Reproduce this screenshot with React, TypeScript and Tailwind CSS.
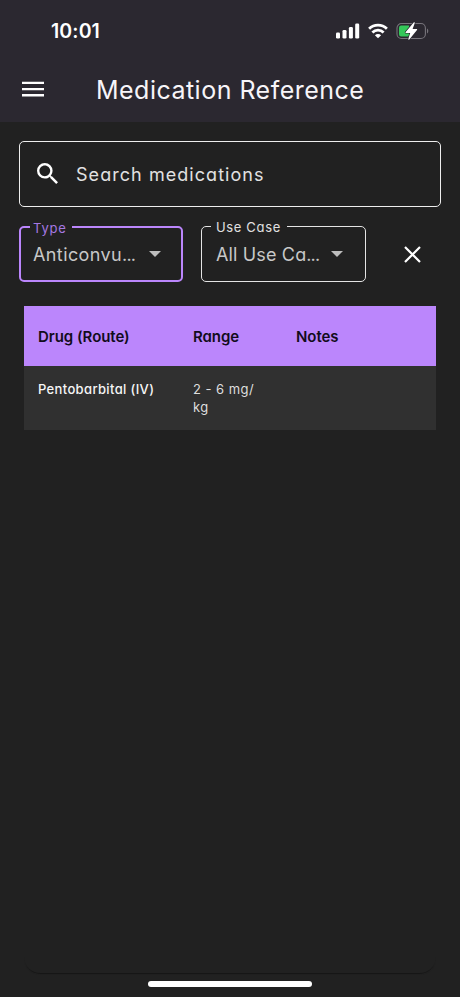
import React from "react";

function StatusBar() {
  return (
    <div className="flex h-[62px] items-center justify-between pl-[51px] pr-[31px]">
      <span className="pt-[2px] text-[19.5px] font-semibold leading-none tracking-[0.1px] text-white">10:01</span>
      <div className="flex items-center gap-[8px]">
        <svg width="24" height="16" viewBox="0 0 24 16" fill="#fff">
          <rect x="0" y="9.5" width="4" height="6" rx="1.3" />
          <rect x="6.5" y="7" width="4" height="8.5" rx="1.3" />
          <rect x="12.9" y="4" width="4" height="11.5" rx="1.3" />
          <rect x="19.2" y="0.5" width="4" height="15" rx="1.3" />
        </svg>
        <svg width="20" height="16" viewBox="0 0 20 16" fill="none" stroke="#fff" strokeWidth="2.8">
          <path d="M1.1 5.8a12.8 12.8 0 0 1 17.8 0" />
          <path d="M4.4 9.4a8 8 0 0 1 11.2 0" />
          <path d="M10 15.3 6.9 12.2a4.4 4.4 0 0 1 6.2 0z" fill="#fff" stroke="none" />
        </svg>
        <svg width="33" height="20" viewBox="0 0 33 20">
          <rect x="1" y="2.5" width="28.4" height="15" rx="4.5" fill="none" stroke="#77747b" strokeWidth="1.1" />
          <path d="M31 7.6c1.7.7 1.7 4.2 0 4.9z" fill="#77747b" />
          <path d="M5.2 4.5H13v11H5.2A2.2 2.2 0 0 1 3 13.3V6.7A2.2 2.2 0 0 1 5.2 4.5z" fill="#34c759" />
          <path d="M17.7 1.5 9.7 10.9c-.4.5-.1 1 .5 1h4l-1.9 6c-.2.8.5 1.1 1 .5l7.7-9.3c.4-.5.1-1-.5-1h-3.9l2.2-6c.2-.8-.6-1.2-1.1-.6z" fill="#fff" stroke="#2b2830" strokeWidth="1.4" paintOrder="stroke" />
        </svg>
      </div>
    </div>
  );
}

function Caret() {
  return (
    <svg width="12" height="6" viewBox="0 0 12 6" fill="#bdbdbd">
      <path d="M0 0h12L6 6z" />
    </svg>
  );
}

export default function App() {
  return (
    <div className="flex h-[997px] w-[460px] flex-col overflow-hidden bg-[#212121] font-['Inter',sans-serif] [font-feature-settings:'cv11']">
      <header className="h-[122px] shrink-0 bg-[#2b2830] [font-feature-settings:normal]">
        <StatusBar />
        <div className="flex h-[54px] items-center pl-[22px]">
          <svg width="22" height="16" viewBox="0 0 22 16" fill="#fff">
            <path d="M0 .7h22v2.3H0zM0 6.9h22v2.3H0zM0 13.1h22v2.3H0z" />
          </svg>
          <h1 className="ml-[52px] whitespace-nowrap pt-[2px] text-[25px] leading-none tracking-[0.48px] text-[#f7f5f9]">Medication Reference</h1>
        </div>
      </header>

      <main className="flex min-h-0 flex-1 flex-col pt-[19px]">
        <div className="mx-[19px] flex h-[66px] shrink-0 items-center rounded-[5px] border-[1.5px] border-[#eee] pl-[17px]">
          <svg className="-mt-[2px]" width="21" height="21" viewBox="3 3 17.5 17.5" fill="#fff">
            <path d="M15.5 14h-.79l-.28-.27A6.47 6.47 0 0 0 16 9.5 6.5 6.5 0 1 0 9.5 16c1.61 0 3.09-.59 4.23-1.57l.27.28v.79l5 4.99L20.49 19l-4.99-5zm-6 0C7.01 14 5 11.99 5 9.5S7.01 5 9.5 5 14 7.01 14 9.5 11.99 14 9.5 14z" />
          </svg>
          <span className="ml-[18px] text-[18px] tracking-[1.05px] text-[#e2e2e2]">Search medications</span>
        </div>

        <div className="ml-[19px] mt-[19px] flex h-[56px] shrink-0 items-center">
          <div className="relative flex h-full w-[164px] items-center rounded-[5px] border-2 border-[#bb86fc] pl-3">
            <span className="absolute left-[9px] top-[-8px] bg-[#212121] pl-[3px] pr-[5px] text-[13px] leading-[16px] tracking-[0.8px] text-[#a578e2]">Type</span>
            <span className="w-[116px] whitespace-nowrap pt-px text-[18px] tracking-[0.4px] text-[#c8c8c8]">Anticonvu<span className="tracking-[-0.9px]">...</span></span>
            <Caret />
          </div>
          <div className="relative ml-[18px] flex h-full w-[165px] items-center rounded-[5px] border-[1.5px] border-[#e4e4e4] pl-[14px]">
            <span className="absolute left-[9px] top-[-8px] whitespace-nowrap bg-[#212121] pl-[5px] pr-[6px] text-[13px] leading-[16px] tracking-[0.65px] text-[#e0e0e0]">Use Case</span>
            <span className="w-[115px] whitespace-nowrap pt-px text-[18px] tracking-[0.15px] text-[#c8c8c8]">All Use Ca<span className="tracking-[-0.9px]">...</span></span>
            <Caret />
          </div>
          <svg className="ml-[38px]" width="17" height="17" viewBox="0 0 17 17" stroke="#fff" strokeWidth="2.2">
            <path d="M1 1l15 15M16 1 1 16" />
          </svg>
        </div>

        <section className="mx-6 mt-[24px] h-[667px] shrink-0 rounded-b-[16px] shadow-[0_2px_1px_-1px_#161616]">
          <div className="grid h-[60px] grid-cols-[155px_103px_1fr] items-center bg-[#bb86fc] pl-[14px] pt-[2px] text-[15px] font-semibold tracking-[-0.05px] text-[#120c1b]">
            <span>Drug (Route)</span>
            <span>Range</span>
            <span>Notes</span>
          </div>
          <div className="grid h-[64px] grid-cols-[155px_80px_1fr] items-start bg-[#303030] pl-[14px] pt-[14px] text-[13px] leading-[18px]">
            <span className="font-medium tracking-[0.35px] text-[#f6f6f6]">Pentobarbital (IV)</span>
            <span className="tracking-[0.45px] text-[#dedede]">2 - 6 mg/<br />kg</span>
          </div>
        </section>
        <div className="mx-auto mt-[8px] h-[6px] w-[164px] shrink-0 rounded-full bg-white" />
      </main>
    </div>
  );
}
